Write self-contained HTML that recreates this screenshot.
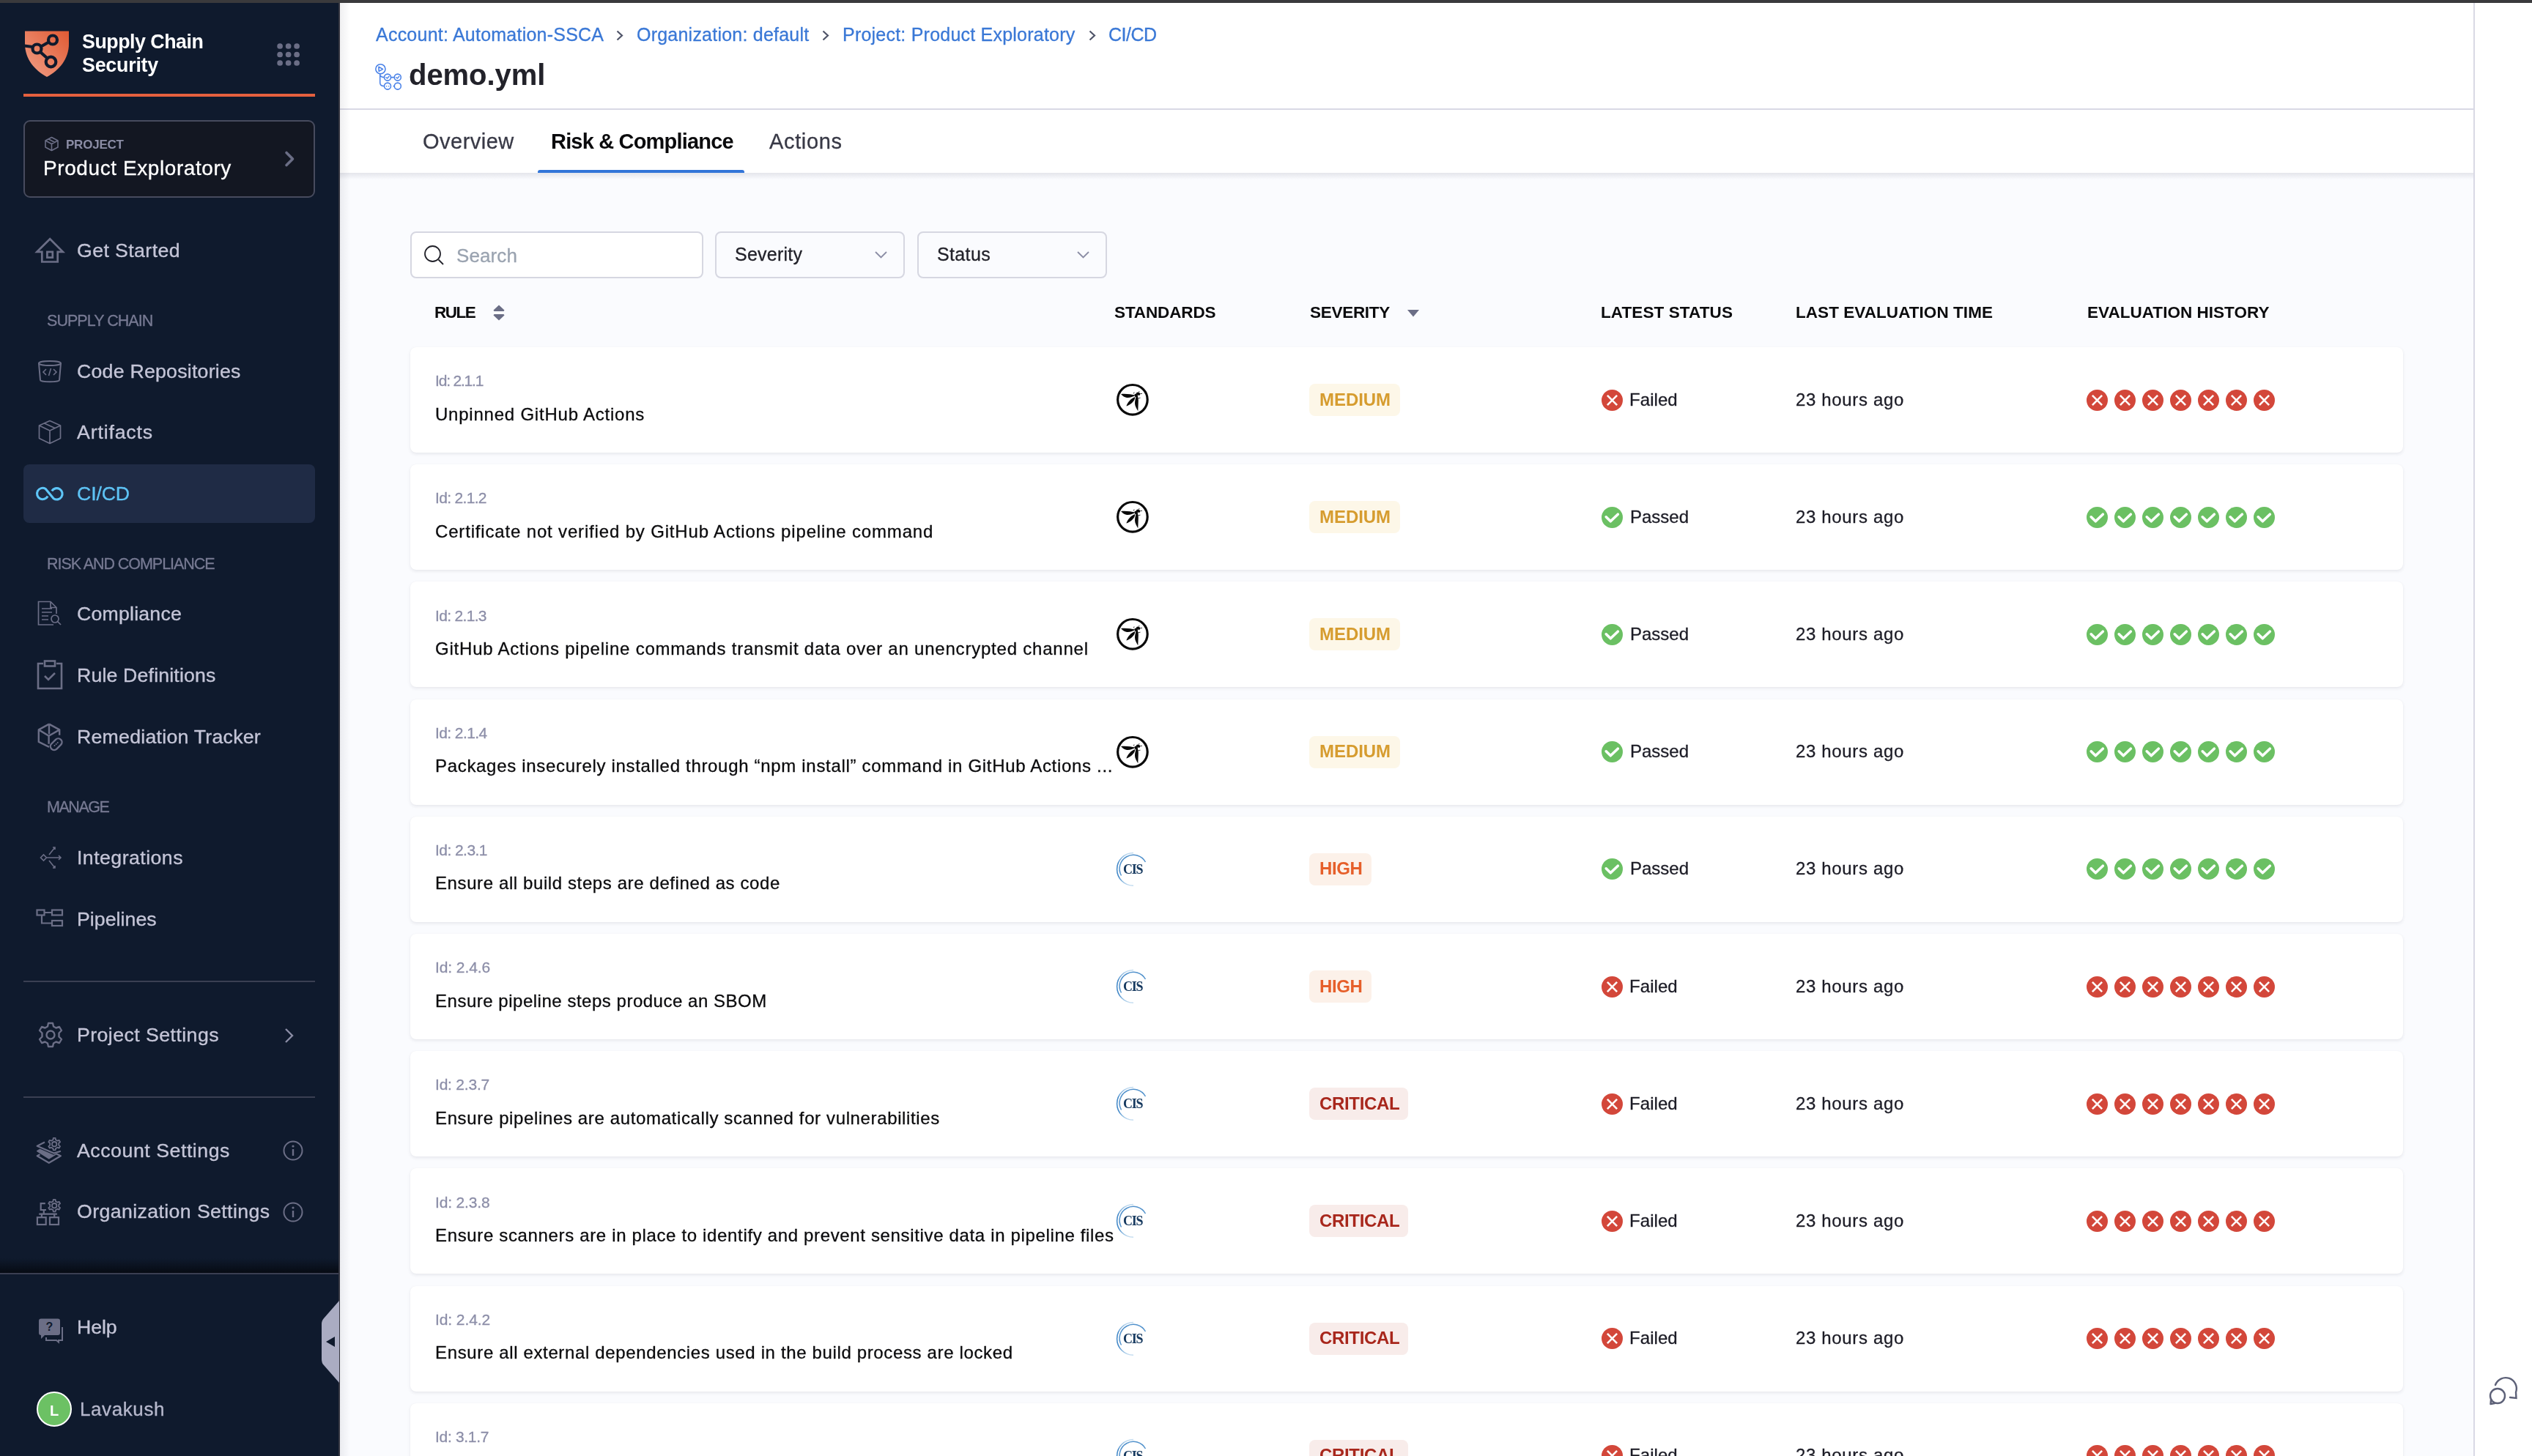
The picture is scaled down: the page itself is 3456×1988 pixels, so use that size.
<!DOCTYPE html><html><head><meta charset="utf-8"><style>
*{box-sizing:border-box;margin:0;padding:0}
html,body{width:3456px;height:1988px;overflow:hidden}
body{position:relative;background:#fafbfe;font-family:"Liberation Sans",sans-serif}
.t{position:absolute;white-space:nowrap;line-height:1;will-change:transform}
.a{position:absolute}
svg{position:absolute;overflow:visible}
</style></head><body>
<div class="a" style="left:464px;top:4px;width:2913px;height:232px;background:#fff"></div>
<div class="a" style="left:464px;top:148px;width:2913px;height:2px;background:#d9d9e5"></div>
<div class="a" style="left:464px;top:236px;width:2913px;height:9px;background:linear-gradient(#e4e5eb,rgba(250,251,254,0))"></div>
<div class="a" style="left:3378px;top:4px;width:78px;height:1984px;background:#fff"></div>
<div class="a" style="left:3376px;top:4px;width:2px;height:1984px;background:#d9d9e5"></div>
<div class="t" style="left:512.60px;top:34.84px;font-size:25px;color:#3a78d6;-webkit-text-stroke-width:0.3px;letter-spacing:0.231px;">Account: Automation-SSCA</div>
<div class="t" style="left:869.00px;top:34.84px;font-size:25px;color:#3a78d6;-webkit-text-stroke-width:0.3px;letter-spacing:0.226px;">Organization: default</div>
<div class="t" style="left:1149.60px;top:34.84px;font-size:25px;color:#3a78d6;-webkit-text-stroke-width:0.3px;letter-spacing:0.222px;">Project: Product Exploratory</div>
<div class="t" style="left:1513.00px;top:34.84px;font-size:25px;color:#3a78d6;-webkit-text-stroke-width:0.3px;letter-spacing:-0.509px;">CI/CD</div>
<svg style="left:841px;top:41px" width="10" height="15" viewBox="0 0 10 15"><path d="M1.5 1.5 L8 7.5 L1.5 13.5" fill="none" stroke="#4f5468" stroke-width="2.2"/></svg>
<svg style="left:1121.5px;top:41px" width="10" height="15" viewBox="0 0 10 15"><path d="M1.5 1.5 L8 7.5 L1.5 13.5" fill="none" stroke="#4f5468" stroke-width="2.2"/></svg>
<svg style="left:1486px;top:41px" width="10" height="15" viewBox="0 0 10 15"><path d="M1.5 1.5 L8 7.5 L1.5 13.5" fill="none" stroke="#4f5468" stroke-width="2.2"/></svg>
<svg style="left:512px;top:87px" width="36" height="36" viewBox="0 0 36 36"><g fill="none" stroke="#4a82e8" stroke-width="1.55" stroke-linejoin="round" stroke-linecap="round">
<circle cx="7.4" cy="7.25" r="6.6"/><path d="M4.9 4.3 L10.6 7.4 L5.2 10.4 Z"/><path d="M6.7 14.3 V26 Q6.7 30.6 12.3 30.6 M6.7 15.8 Q8.5 18.6 12.3 18.6 M21.7 18.6 H26.1 M25.2 30.6 H26.1"/>
<circle cx="17" cy="18.6" r="4.5"/><circle cx="30.8" cy="18.6" r="4.5"/><circle cx="17" cy="30.6" r="4.5"/><circle cx="30.8" cy="30.6" r="4.5"/>
<path d="M15 18.8 L16.5 20 L19 17.3 M28.8 18.8 L30.3 20 L32.8 17.3" stroke-width="1.4"/></g><g fill="#4a82e8"><circle cx="15.6" cy="30.8" r="0.8"/><circle cx="18.6" cy="30.8" r="0.8"/></g></svg>
<div class="t" style="left:557.70px;top:82.14px;font-size:40px;color:#22222a;font-weight:700;letter-spacing:-0.052px;">demo.yml</div>
<div class="t" style="left:577.00px;top:178.85px;font-size:29px;color:#383946;-webkit-text-stroke-width:0.3px;letter-spacing:0.482px;">Overview</div>
<div class="t" style="left:751.50px;top:178.85px;font-size:29px;color:#0b0b0d;font-weight:700;letter-spacing:-0.817px;">Risk &amp; Compliance</div>
<div class="t" style="left:1050.00px;top:178.85px;font-size:29px;color:#383946;-webkit-text-stroke-width:0.3px;letter-spacing:0.644px;">Actions</div>
<div class="a" style="left:734px;top:232px;width:282px;height:4px;background:#3275d8;border-radius:3px 3px 0 0"></div>
<div class="a" style="left:560px;top:316px;width:400px;height:64px;background:#fff;border:2px solid #d6d7e1;border-radius:8px"></div>
<svg style="left:579px;top:335px" width="27" height="27" viewBox="0 0 27 27"><g fill="none" stroke="#22222a" stroke-width="1.8"><circle cx="11.5" cy="11.5" r="10.5"/><path d="M19.5 19.5 L26 26"/></g></svg>
<div class="t" style="left:623.20px;top:335.99px;font-size:26px;color:#9aa3b0;-webkit-text-stroke-width:0.3px;letter-spacing:0.107px;">Search</div>
<div class="a" style="left:976px;top:316px;width:259px;height:64px;border:2px solid #d6d7e1;border-radius:8px"></div>
<div class="t" style="left:1003.00px;top:334.84px;font-size:25px;color:#22222a;-webkit-text-stroke-width:0.3px;letter-spacing:0.236px;">Severity</div>
<svg style="left:1194px;top:343px" width="17" height="10" viewBox="0 0 17 10"><path d="M1 1 L8.5 8.5 L16 1" fill="none" stroke="#8b8da5" stroke-width="1.8"/></svg>
<div class="a" style="left:1252px;top:316px;width:259px;height:64px;border:2px solid #d6d7e1;border-radius:8px"></div>
<div class="t" style="left:1279.00px;top:334.84px;font-size:25px;color:#22222a;-webkit-text-stroke-width:0.3px;letter-spacing:0.352px;">Status</div>
<svg style="left:1470px;top:343px" width="17" height="10" viewBox="0 0 17 10"><path d="M1 1 L8.5 8.5 L16 1" fill="none" stroke="#8b8da5" stroke-width="1.8"/></svg>
<div class="t" style="left:592.90px;top:415.95px;font-size:22.5px;color:#0b0b0d;font-weight:700;letter-spacing:-1.488px;">RULE</div>
<svg style="left:673px;top:416px" width="16" height="22" viewBox="0 0 16 22"><path d="M8 0.5 L15.5 7.5 L14.5 9 H1.5 L0.5 7.5 Z M8 21.5 L15.5 14.5 L14.5 13 H1.5 L0.5 14.5 Z" fill="#6b6e86"/></svg>
<div class="t" style="left:1521.00px;top:415.95px;font-size:22.5px;color:#0b0b0d;font-weight:700;letter-spacing:-0.120px;">STANDARDS</div>
<div class="t" style="left:1787.80px;top:415.95px;font-size:22.5px;color:#0b0b0d;font-weight:700;letter-spacing:-0.281px;">SEVERITY</div>
<svg style="left:1921px;top:423px" width="16" height="10" viewBox="0 0 16 10"><path d="M0 0 H16 L8 9.5 Z" fill="#6b6e86"/></svg>
<div class="t" style="left:2185.00px;top:415.95px;font-size:22.5px;color:#0b0b0d;font-weight:700;letter-spacing:0.097px;">LATEST STATUS</div>
<div class="t" style="left:2451.00px;top:415.95px;font-size:22.5px;color:#0b0b0d;font-weight:700;letter-spacing:0.055px;">LAST EVALUATION TIME</div>
<div class="t" style="left:2849.00px;top:415.95px;font-size:22.5px;color:#0b0b0d;font-weight:700;letter-spacing:0.032px;">EVALUATION HISTORY</div>
<div class="a" style="left:560px;top:474.00px;width:2720px;height:144px;background:#fff;border-radius:8px;box-shadow:0 2px 4px rgba(40,41,61,0.09),0 0 1px rgba(40,41,61,0.05)"></div>
<div class="t" style="left:594.40px;top:509.22px;font-size:21px;color:#8c8ea8;-webkit-text-stroke-width:0.3px;letter-spacing:-1.181px;">Id: 2.1.1</div>
<div class="t" style="left:594.40px;top:553.68px;font-size:24px;color:#0b0b0d;-webkit-text-stroke-width:0.3px;letter-spacing:0.777px;">Unpinned GitHub Actions</div>
<svg style="left:1516px;top:516.0px" width="60" height="60" viewBox="0 0 60 60"><circle cx="29.9" cy="29.8" r="20.3" fill="none" stroke="#0a0a0a" stroke-width="3.2"/><g fill="#0a0a0a">
<path d="M14 22 C20 21.3 28 22.3 34 23.8 C30 26.2 25 27.6 21 26.8 C18 26 15.8 24.2 14 22 Z"/>
<path d="M21.3 38.6 C23.5 33 27 28.5 33.2 26 C33.8 28 31.5 32.2 28.3 34.8 C26.2 36.6 23.6 37.9 21.3 38.6 Z"/>
<path d="M35 24.2 C36.8 24.2 37.8 27 37.8 31 L37.3 45.2 C35 41.5 33 38 33 34.5 C33 31 34.2 27 35 24.2 Z"/>
<path d="M32.5 22.5 L36.5 20.5 L37.2 27.5 L33 25.5 Z"/>
<path d="M35.2 20.2 C36.8 19 38.8 19.4 40.6 21.6 L39.8 23.6 C38.2 24.2 36.4 23.6 35.2 22.4 Z"/>
</g><g stroke="#0a0a0a" stroke-width="0.8" fill="none"><path d="M31.5 21.5 L32 19.5 M38.5 19.5 L39 18 M40.5 21.5 L43 21.5 M37 28 L40.5 27.2"/></g></svg>
<div class="a" style="left:1787px;top:524.00px;width:123.5px;height:44px;background:#fdf7e8;border-radius:8px"></div>
<div class="t" style="left:1800.50px;top:533.68px;font-size:24px;color:#d69c2f;font-weight:700;letter-spacing:-0.057px;">MEDIUM</div>
<svg style="left:2185.5px;top:531.5px" width="29.0" height="29.0" viewBox="0 0 29 29"><circle cx="14.5" cy="14.5" r="14.5" fill="#d3473a"/><path d="M7.9 7.9 L21.1 21.1 M21.1 7.9 L7.9 21.1" stroke="#fff" stroke-width="2.6"/></svg>
<div class="t" style="left:2224.00px;top:533.68px;font-size:24px;color:#1c1c26;-webkit-text-stroke-width:0.3px;letter-spacing:0.059px;">Failed</div>
<div class="t" style="left:2451.30px;top:533.68px;font-size:24px;color:#1c1c26;-webkit-text-stroke-width:0.3px;letter-spacing:0.659px;">23 hours ago</div>
<svg style="left:2848.0px;top:531.5px" width="29.0" height="29.0" viewBox="0 0 29 29"><circle cx="14.5" cy="14.5" r="14.5" fill="#d3473a"/><path d="M7.9 7.9 L21.1 21.1 M21.1 7.9 L7.9 21.1" stroke="#fff" stroke-width="2.6"/></svg><svg style="left:2886.0px;top:531.5px" width="29.0" height="29.0" viewBox="0 0 29 29"><circle cx="14.5" cy="14.5" r="14.5" fill="#d3473a"/><path d="M7.9 7.9 L21.1 21.1 M21.1 7.9 L7.9 21.1" stroke="#fff" stroke-width="2.6"/></svg><svg style="left:2924.0px;top:531.5px" width="29.0" height="29.0" viewBox="0 0 29 29"><circle cx="14.5" cy="14.5" r="14.5" fill="#d3473a"/><path d="M7.9 7.9 L21.1 21.1 M21.1 7.9 L7.9 21.1" stroke="#fff" stroke-width="2.6"/></svg><svg style="left:2962.0px;top:531.5px" width="29.0" height="29.0" viewBox="0 0 29 29"><circle cx="14.5" cy="14.5" r="14.5" fill="#d3473a"/><path d="M7.9 7.9 L21.1 21.1 M21.1 7.9 L7.9 21.1" stroke="#fff" stroke-width="2.6"/></svg><svg style="left:3000.0px;top:531.5px" width="29.0" height="29.0" viewBox="0 0 29 29"><circle cx="14.5" cy="14.5" r="14.5" fill="#d3473a"/><path d="M7.9 7.9 L21.1 21.1 M21.1 7.9 L7.9 21.1" stroke="#fff" stroke-width="2.6"/></svg><svg style="left:3038.0px;top:531.5px" width="29.0" height="29.0" viewBox="0 0 29 29"><circle cx="14.5" cy="14.5" r="14.5" fill="#d3473a"/><path d="M7.9 7.9 L21.1 21.1 M21.1 7.9 L7.9 21.1" stroke="#fff" stroke-width="2.6"/></svg><svg style="left:3076.0px;top:531.5px" width="29.0" height="29.0" viewBox="0 0 29 29"><circle cx="14.5" cy="14.5" r="14.5" fill="#d3473a"/><path d="M7.9 7.9 L21.1 21.1 M21.1 7.9 L7.9 21.1" stroke="#fff" stroke-width="2.6"/></svg>
<div class="a" style="left:560px;top:634.20px;width:2720px;height:144px;background:#fff;border-radius:8px;box-shadow:0 2px 4px rgba(40,41,61,0.09),0 0 1px rgba(40,41,61,0.05)"></div>
<div class="t" style="left:594.40px;top:669.42px;font-size:21px;color:#8c8ea8;-webkit-text-stroke-width:0.3px;letter-spacing:-0.670px;">Id: 2.1.2</div>
<div class="t" style="left:594.40px;top:713.88px;font-size:24px;color:#0b0b0d;-webkit-text-stroke-width:0.3px;letter-spacing:0.835px;">Certificate not verified by GitHub Actions pipeline command</div>
<svg style="left:1516px;top:676.2px" width="60" height="60" viewBox="0 0 60 60"><circle cx="29.9" cy="29.8" r="20.3" fill="none" stroke="#0a0a0a" stroke-width="3.2"/><g fill="#0a0a0a">
<path d="M14 22 C20 21.3 28 22.3 34 23.8 C30 26.2 25 27.6 21 26.8 C18 26 15.8 24.2 14 22 Z"/>
<path d="M21.3 38.6 C23.5 33 27 28.5 33.2 26 C33.8 28 31.5 32.2 28.3 34.8 C26.2 36.6 23.6 37.9 21.3 38.6 Z"/>
<path d="M35 24.2 C36.8 24.2 37.8 27 37.8 31 L37.3 45.2 C35 41.5 33 38 33 34.5 C33 31 34.2 27 35 24.2 Z"/>
<path d="M32.5 22.5 L36.5 20.5 L37.2 27.5 L33 25.5 Z"/>
<path d="M35.2 20.2 C36.8 19 38.8 19.4 40.6 21.6 L39.8 23.6 C38.2 24.2 36.4 23.6 35.2 22.4 Z"/>
</g><g stroke="#0a0a0a" stroke-width="0.8" fill="none"><path d="M31.5 21.5 L32 19.5 M38.5 19.5 L39 18 M40.5 21.5 L43 21.5 M37 28 L40.5 27.2"/></g></svg>
<div class="a" style="left:1787px;top:684.20px;width:123.5px;height:44px;background:#fdf7e8;border-radius:8px"></div>
<div class="t" style="left:1800.50px;top:693.88px;font-size:24px;color:#d69c2f;font-weight:700;letter-spacing:-0.057px;">MEDIUM</div>
<svg style="left:2185.5px;top:691.7px" width="29.0" height="29.0" viewBox="0 0 29 29"><circle cx="14.5" cy="14.5" r="14.5" fill="#6bc063"/><path d="M6.2 13.8 L12.3 19.8 L22.3 10.2" fill="none" stroke="#fff" stroke-width="3.6" stroke-linecap="round" stroke-linejoin="round"/></svg>
<div class="t" style="left:2224.60px;top:693.88px;font-size:24px;color:#1c1c26;-webkit-text-stroke-width:0.3px;letter-spacing:-0.008px;">Passed</div>
<div class="t" style="left:2451.30px;top:693.88px;font-size:24px;color:#1c1c26;-webkit-text-stroke-width:0.3px;letter-spacing:0.659px;">23 hours ago</div>
<svg style="left:2848.0px;top:691.7px" width="29.0" height="29.0" viewBox="0 0 29 29"><circle cx="14.5" cy="14.5" r="14.5" fill="#6bc063"/><path d="M6.2 13.8 L12.3 19.8 L22.3 10.2" fill="none" stroke="#fff" stroke-width="3.6" stroke-linecap="round" stroke-linejoin="round"/></svg><svg style="left:2886.0px;top:691.7px" width="29.0" height="29.0" viewBox="0 0 29 29"><circle cx="14.5" cy="14.5" r="14.5" fill="#6bc063"/><path d="M6.2 13.8 L12.3 19.8 L22.3 10.2" fill="none" stroke="#fff" stroke-width="3.6" stroke-linecap="round" stroke-linejoin="round"/></svg><svg style="left:2924.0px;top:691.7px" width="29.0" height="29.0" viewBox="0 0 29 29"><circle cx="14.5" cy="14.5" r="14.5" fill="#6bc063"/><path d="M6.2 13.8 L12.3 19.8 L22.3 10.2" fill="none" stroke="#fff" stroke-width="3.6" stroke-linecap="round" stroke-linejoin="round"/></svg><svg style="left:2962.0px;top:691.7px" width="29.0" height="29.0" viewBox="0 0 29 29"><circle cx="14.5" cy="14.5" r="14.5" fill="#6bc063"/><path d="M6.2 13.8 L12.3 19.8 L22.3 10.2" fill="none" stroke="#fff" stroke-width="3.6" stroke-linecap="round" stroke-linejoin="round"/></svg><svg style="left:3000.0px;top:691.7px" width="29.0" height="29.0" viewBox="0 0 29 29"><circle cx="14.5" cy="14.5" r="14.5" fill="#6bc063"/><path d="M6.2 13.8 L12.3 19.8 L22.3 10.2" fill="none" stroke="#fff" stroke-width="3.6" stroke-linecap="round" stroke-linejoin="round"/></svg><svg style="left:3038.0px;top:691.7px" width="29.0" height="29.0" viewBox="0 0 29 29"><circle cx="14.5" cy="14.5" r="14.5" fill="#6bc063"/><path d="M6.2 13.8 L12.3 19.8 L22.3 10.2" fill="none" stroke="#fff" stroke-width="3.6" stroke-linecap="round" stroke-linejoin="round"/></svg><svg style="left:3076.0px;top:691.7px" width="29.0" height="29.0" viewBox="0 0 29 29"><circle cx="14.5" cy="14.5" r="14.5" fill="#6bc063"/><path d="M6.2 13.8 L12.3 19.8 L22.3 10.2" fill="none" stroke="#fff" stroke-width="3.6" stroke-linecap="round" stroke-linejoin="round"/></svg>
<div class="a" style="left:560px;top:794.40px;width:2720px;height:144px;background:#fff;border-radius:8px;box-shadow:0 2px 4px rgba(40,41,61,0.09),0 0 1px rgba(40,41,61,0.05)"></div>
<div class="t" style="left:594.40px;top:829.62px;font-size:21px;color:#8c8ea8;-webkit-text-stroke-width:0.3px;letter-spacing:-0.670px;">Id: 2.1.3</div>
<div class="t" style="left:594.40px;top:874.08px;font-size:24px;color:#0b0b0d;-webkit-text-stroke-width:0.3px;letter-spacing:0.784px;">GitHub Actions pipeline commands transmit data over an unencrypted channel</div>
<svg style="left:1516px;top:836.4px" width="60" height="60" viewBox="0 0 60 60"><circle cx="29.9" cy="29.8" r="20.3" fill="none" stroke="#0a0a0a" stroke-width="3.2"/><g fill="#0a0a0a">
<path d="M14 22 C20 21.3 28 22.3 34 23.8 C30 26.2 25 27.6 21 26.8 C18 26 15.8 24.2 14 22 Z"/>
<path d="M21.3 38.6 C23.5 33 27 28.5 33.2 26 C33.8 28 31.5 32.2 28.3 34.8 C26.2 36.6 23.6 37.9 21.3 38.6 Z"/>
<path d="M35 24.2 C36.8 24.2 37.8 27 37.8 31 L37.3 45.2 C35 41.5 33 38 33 34.5 C33 31 34.2 27 35 24.2 Z"/>
<path d="M32.5 22.5 L36.5 20.5 L37.2 27.5 L33 25.5 Z"/>
<path d="M35.2 20.2 C36.8 19 38.8 19.4 40.6 21.6 L39.8 23.6 C38.2 24.2 36.4 23.6 35.2 22.4 Z"/>
</g><g stroke="#0a0a0a" stroke-width="0.8" fill="none"><path d="M31.5 21.5 L32 19.5 M38.5 19.5 L39 18 M40.5 21.5 L43 21.5 M37 28 L40.5 27.2"/></g></svg>
<div class="a" style="left:1787px;top:844.40px;width:123.5px;height:44px;background:#fdf7e8;border-radius:8px"></div>
<div class="t" style="left:1800.50px;top:854.08px;font-size:24px;color:#d69c2f;font-weight:700;letter-spacing:-0.057px;">MEDIUM</div>
<svg style="left:2185.5px;top:851.9px" width="29.0" height="29.0" viewBox="0 0 29 29"><circle cx="14.5" cy="14.5" r="14.5" fill="#6bc063"/><path d="M6.2 13.8 L12.3 19.8 L22.3 10.2" fill="none" stroke="#fff" stroke-width="3.6" stroke-linecap="round" stroke-linejoin="round"/></svg>
<div class="t" style="left:2224.60px;top:854.08px;font-size:24px;color:#1c1c26;-webkit-text-stroke-width:0.3px;letter-spacing:-0.008px;">Passed</div>
<div class="t" style="left:2451.30px;top:854.08px;font-size:24px;color:#1c1c26;-webkit-text-stroke-width:0.3px;letter-spacing:0.659px;">23 hours ago</div>
<svg style="left:2848.0px;top:851.9px" width="29.0" height="29.0" viewBox="0 0 29 29"><circle cx="14.5" cy="14.5" r="14.5" fill="#6bc063"/><path d="M6.2 13.8 L12.3 19.8 L22.3 10.2" fill="none" stroke="#fff" stroke-width="3.6" stroke-linecap="round" stroke-linejoin="round"/></svg><svg style="left:2886.0px;top:851.9px" width="29.0" height="29.0" viewBox="0 0 29 29"><circle cx="14.5" cy="14.5" r="14.5" fill="#6bc063"/><path d="M6.2 13.8 L12.3 19.8 L22.3 10.2" fill="none" stroke="#fff" stroke-width="3.6" stroke-linecap="round" stroke-linejoin="round"/></svg><svg style="left:2924.0px;top:851.9px" width="29.0" height="29.0" viewBox="0 0 29 29"><circle cx="14.5" cy="14.5" r="14.5" fill="#6bc063"/><path d="M6.2 13.8 L12.3 19.8 L22.3 10.2" fill="none" stroke="#fff" stroke-width="3.6" stroke-linecap="round" stroke-linejoin="round"/></svg><svg style="left:2962.0px;top:851.9px" width="29.0" height="29.0" viewBox="0 0 29 29"><circle cx="14.5" cy="14.5" r="14.5" fill="#6bc063"/><path d="M6.2 13.8 L12.3 19.8 L22.3 10.2" fill="none" stroke="#fff" stroke-width="3.6" stroke-linecap="round" stroke-linejoin="round"/></svg><svg style="left:3000.0px;top:851.9px" width="29.0" height="29.0" viewBox="0 0 29 29"><circle cx="14.5" cy="14.5" r="14.5" fill="#6bc063"/><path d="M6.2 13.8 L12.3 19.8 L22.3 10.2" fill="none" stroke="#fff" stroke-width="3.6" stroke-linecap="round" stroke-linejoin="round"/></svg><svg style="left:3038.0px;top:851.9px" width="29.0" height="29.0" viewBox="0 0 29 29"><circle cx="14.5" cy="14.5" r="14.5" fill="#6bc063"/><path d="M6.2 13.8 L12.3 19.8 L22.3 10.2" fill="none" stroke="#fff" stroke-width="3.6" stroke-linecap="round" stroke-linejoin="round"/></svg><svg style="left:3076.0px;top:851.9px" width="29.0" height="29.0" viewBox="0 0 29 29"><circle cx="14.5" cy="14.5" r="14.5" fill="#6bc063"/><path d="M6.2 13.8 L12.3 19.8 L22.3 10.2" fill="none" stroke="#fff" stroke-width="3.6" stroke-linecap="round" stroke-linejoin="round"/></svg>
<div class="a" style="left:560px;top:954.60px;width:2720px;height:144px;background:#fff;border-radius:8px;box-shadow:0 2px 4px rgba(40,41,61,0.09),0 0 1px rgba(40,41,61,0.05)"></div>
<div class="t" style="left:594.40px;top:989.82px;font-size:21px;color:#8c8ea8;-webkit-text-stroke-width:0.3px;letter-spacing:-0.592px;">Id: 2.1.4</div>
<div class="t" style="left:594.40px;top:1034.28px;font-size:24px;color:#0b0b0d;-webkit-text-stroke-width:0.3px;letter-spacing:0.684px;">Packages insecurely installed through &#8220;npm install&#8221; command in GitHub Actions ...</div>
<svg style="left:1516px;top:996.5999999999999px" width="60" height="60" viewBox="0 0 60 60"><circle cx="29.9" cy="29.8" r="20.3" fill="none" stroke="#0a0a0a" stroke-width="3.2"/><g fill="#0a0a0a">
<path d="M14 22 C20 21.3 28 22.3 34 23.8 C30 26.2 25 27.6 21 26.8 C18 26 15.8 24.2 14 22 Z"/>
<path d="M21.3 38.6 C23.5 33 27 28.5 33.2 26 C33.8 28 31.5 32.2 28.3 34.8 C26.2 36.6 23.6 37.9 21.3 38.6 Z"/>
<path d="M35 24.2 C36.8 24.2 37.8 27 37.8 31 L37.3 45.2 C35 41.5 33 38 33 34.5 C33 31 34.2 27 35 24.2 Z"/>
<path d="M32.5 22.5 L36.5 20.5 L37.2 27.5 L33 25.5 Z"/>
<path d="M35.2 20.2 C36.8 19 38.8 19.4 40.6 21.6 L39.8 23.6 C38.2 24.2 36.4 23.6 35.2 22.4 Z"/>
</g><g stroke="#0a0a0a" stroke-width="0.8" fill="none"><path d="M31.5 21.5 L32 19.5 M38.5 19.5 L39 18 M40.5 21.5 L43 21.5 M37 28 L40.5 27.2"/></g></svg>
<div class="a" style="left:1787px;top:1004.60px;width:123.5px;height:44px;background:#fdf7e8;border-radius:8px"></div>
<div class="t" style="left:1800.50px;top:1014.28px;font-size:24px;color:#d69c2f;font-weight:700;letter-spacing:-0.057px;">MEDIUM</div>
<svg style="left:2185.5px;top:1012.0999999999999px" width="29.0" height="29.0" viewBox="0 0 29 29"><circle cx="14.5" cy="14.5" r="14.5" fill="#6bc063"/><path d="M6.2 13.8 L12.3 19.8 L22.3 10.2" fill="none" stroke="#fff" stroke-width="3.6" stroke-linecap="round" stroke-linejoin="round"/></svg>
<div class="t" style="left:2224.60px;top:1014.28px;font-size:24px;color:#1c1c26;-webkit-text-stroke-width:0.3px;letter-spacing:-0.008px;">Passed</div>
<div class="t" style="left:2451.30px;top:1014.28px;font-size:24px;color:#1c1c26;-webkit-text-stroke-width:0.3px;letter-spacing:0.659px;">23 hours ago</div>
<svg style="left:2848.0px;top:1012.0999999999999px" width="29.0" height="29.0" viewBox="0 0 29 29"><circle cx="14.5" cy="14.5" r="14.5" fill="#6bc063"/><path d="M6.2 13.8 L12.3 19.8 L22.3 10.2" fill="none" stroke="#fff" stroke-width="3.6" stroke-linecap="round" stroke-linejoin="round"/></svg><svg style="left:2886.0px;top:1012.0999999999999px" width="29.0" height="29.0" viewBox="0 0 29 29"><circle cx="14.5" cy="14.5" r="14.5" fill="#6bc063"/><path d="M6.2 13.8 L12.3 19.8 L22.3 10.2" fill="none" stroke="#fff" stroke-width="3.6" stroke-linecap="round" stroke-linejoin="round"/></svg><svg style="left:2924.0px;top:1012.0999999999999px" width="29.0" height="29.0" viewBox="0 0 29 29"><circle cx="14.5" cy="14.5" r="14.5" fill="#6bc063"/><path d="M6.2 13.8 L12.3 19.8 L22.3 10.2" fill="none" stroke="#fff" stroke-width="3.6" stroke-linecap="round" stroke-linejoin="round"/></svg><svg style="left:2962.0px;top:1012.0999999999999px" width="29.0" height="29.0" viewBox="0 0 29 29"><circle cx="14.5" cy="14.5" r="14.5" fill="#6bc063"/><path d="M6.2 13.8 L12.3 19.8 L22.3 10.2" fill="none" stroke="#fff" stroke-width="3.6" stroke-linecap="round" stroke-linejoin="round"/></svg><svg style="left:3000.0px;top:1012.0999999999999px" width="29.0" height="29.0" viewBox="0 0 29 29"><circle cx="14.5" cy="14.5" r="14.5" fill="#6bc063"/><path d="M6.2 13.8 L12.3 19.8 L22.3 10.2" fill="none" stroke="#fff" stroke-width="3.6" stroke-linecap="round" stroke-linejoin="round"/></svg><svg style="left:3038.0px;top:1012.0999999999999px" width="29.0" height="29.0" viewBox="0 0 29 29"><circle cx="14.5" cy="14.5" r="14.5" fill="#6bc063"/><path d="M6.2 13.8 L12.3 19.8 L22.3 10.2" fill="none" stroke="#fff" stroke-width="3.6" stroke-linecap="round" stroke-linejoin="round"/></svg><svg style="left:3076.0px;top:1012.0999999999999px" width="29.0" height="29.0" viewBox="0 0 29 29"><circle cx="14.5" cy="14.5" r="14.5" fill="#6bc063"/><path d="M6.2 13.8 L12.3 19.8 L22.3 10.2" fill="none" stroke="#fff" stroke-width="3.6" stroke-linecap="round" stroke-linejoin="round"/></svg>
<div class="a" style="left:560px;top:1114.80px;width:2720px;height:144px;background:#fff;border-radius:8px;box-shadow:0 2px 4px rgba(40,41,61,0.09),0 0 1px rgba(40,41,61,0.05)"></div>
<div class="t" style="left:594.40px;top:1150.02px;font-size:21px;color:#8c8ea8;-webkit-text-stroke-width:0.3px;letter-spacing:-0.548px;">Id: 2.3.1</div>
<div class="t" style="left:594.40px;top:1194.48px;font-size:24px;color:#0b0b0d;-webkit-text-stroke-width:0.3px;letter-spacing:0.603px;">Ensure all build steps are defined as code</div>
<svg style="left:1516px;top:1156.8px" width="60" height="60" viewBox="0 0 60 60">
<defs><linearGradient id="cg" x1="0" y1="0" x2="0" y2="1"><stop offset="0" stop-color="#8dbde3" stop-opacity="0.5"/><stop offset="0.3" stop-color="#3f86c7"/><stop offset="0.75" stop-color="#3f86c7"/><stop offset="1" stop-color="#8dbde3" stop-opacity="0.5"/></linearGradient></defs>
<path d="M31 7.5 A22.4 22.4 0 0 0 31 52.3" fill="none" stroke="url(#cg)" stroke-width="1.5"/>
<path d="M47.5 20 A18.6 18.6 0 1 0 14.5 38.5" fill="none" stroke="#3f86c7" stroke-width="1.5" stroke-opacity="0.9"/>
<text x="17.0" y="35.8" font-family="Liberation Serif" font-weight="700" font-size="18" fill="#173a60" letter-spacing="-1.25">CIS</text></svg>
<div class="a" style="left:1787px;top:1164.80px;width:85px;height:44px;background:#fcf1e9;border-radius:8px"></div>
<div class="t" style="left:1800.50px;top:1174.48px;font-size:24px;color:#e65f2a;font-weight:700;letter-spacing:-0.425px;">HIGH</div>
<svg style="left:2185.5px;top:1172.3px" width="29.0" height="29.0" viewBox="0 0 29 29"><circle cx="14.5" cy="14.5" r="14.5" fill="#6bc063"/><path d="M6.2 13.8 L12.3 19.8 L22.3 10.2" fill="none" stroke="#fff" stroke-width="3.6" stroke-linecap="round" stroke-linejoin="round"/></svg>
<div class="t" style="left:2224.60px;top:1174.48px;font-size:24px;color:#1c1c26;-webkit-text-stroke-width:0.3px;letter-spacing:-0.008px;">Passed</div>
<div class="t" style="left:2451.30px;top:1174.48px;font-size:24px;color:#1c1c26;-webkit-text-stroke-width:0.3px;letter-spacing:0.659px;">23 hours ago</div>
<svg style="left:2848.0px;top:1172.3px" width="29.0" height="29.0" viewBox="0 0 29 29"><circle cx="14.5" cy="14.5" r="14.5" fill="#6bc063"/><path d="M6.2 13.8 L12.3 19.8 L22.3 10.2" fill="none" stroke="#fff" stroke-width="3.6" stroke-linecap="round" stroke-linejoin="round"/></svg><svg style="left:2886.0px;top:1172.3px" width="29.0" height="29.0" viewBox="0 0 29 29"><circle cx="14.5" cy="14.5" r="14.5" fill="#6bc063"/><path d="M6.2 13.8 L12.3 19.8 L22.3 10.2" fill="none" stroke="#fff" stroke-width="3.6" stroke-linecap="round" stroke-linejoin="round"/></svg><svg style="left:2924.0px;top:1172.3px" width="29.0" height="29.0" viewBox="0 0 29 29"><circle cx="14.5" cy="14.5" r="14.5" fill="#6bc063"/><path d="M6.2 13.8 L12.3 19.8 L22.3 10.2" fill="none" stroke="#fff" stroke-width="3.6" stroke-linecap="round" stroke-linejoin="round"/></svg><svg style="left:2962.0px;top:1172.3px" width="29.0" height="29.0" viewBox="0 0 29 29"><circle cx="14.5" cy="14.5" r="14.5" fill="#6bc063"/><path d="M6.2 13.8 L12.3 19.8 L22.3 10.2" fill="none" stroke="#fff" stroke-width="3.6" stroke-linecap="round" stroke-linejoin="round"/></svg><svg style="left:3000.0px;top:1172.3px" width="29.0" height="29.0" viewBox="0 0 29 29"><circle cx="14.5" cy="14.5" r="14.5" fill="#6bc063"/><path d="M6.2 13.8 L12.3 19.8 L22.3 10.2" fill="none" stroke="#fff" stroke-width="3.6" stroke-linecap="round" stroke-linejoin="round"/></svg><svg style="left:3038.0px;top:1172.3px" width="29.0" height="29.0" viewBox="0 0 29 29"><circle cx="14.5" cy="14.5" r="14.5" fill="#6bc063"/><path d="M6.2 13.8 L12.3 19.8 L22.3 10.2" fill="none" stroke="#fff" stroke-width="3.6" stroke-linecap="round" stroke-linejoin="round"/></svg><svg style="left:3076.0px;top:1172.3px" width="29.0" height="29.0" viewBox="0 0 29 29"><circle cx="14.5" cy="14.5" r="14.5" fill="#6bc063"/><path d="M6.2 13.8 L12.3 19.8 L22.3 10.2" fill="none" stroke="#fff" stroke-width="3.6" stroke-linecap="round" stroke-linejoin="round"/></svg>
<div class="a" style="left:560px;top:1275.00px;width:2720px;height:144px;background:#fff;border-radius:8px;box-shadow:0 2px 4px rgba(40,41,61,0.09),0 0 1px rgba(40,41,61,0.05)"></div>
<div class="t" style="left:594.40px;top:1310.22px;font-size:21px;color:#8c8ea8;-webkit-text-stroke-width:0.3px;letter-spacing:-0.092px;">Id: 2.4.6</div>
<div class="t" style="left:594.40px;top:1354.68px;font-size:24px;color:#0b0b0d;-webkit-text-stroke-width:0.3px;letter-spacing:0.517px;">Ensure pipeline steps produce an SBOM</div>
<svg style="left:1516px;top:1317.0px" width="60" height="60" viewBox="0 0 60 60">
<defs><linearGradient id="cg" x1="0" y1="0" x2="0" y2="1"><stop offset="0" stop-color="#8dbde3" stop-opacity="0.5"/><stop offset="0.3" stop-color="#3f86c7"/><stop offset="0.75" stop-color="#3f86c7"/><stop offset="1" stop-color="#8dbde3" stop-opacity="0.5"/></linearGradient></defs>
<path d="M31 7.5 A22.4 22.4 0 0 0 31 52.3" fill="none" stroke="url(#cg)" stroke-width="1.5"/>
<path d="M47.5 20 A18.6 18.6 0 1 0 14.5 38.5" fill="none" stroke="#3f86c7" stroke-width="1.5" stroke-opacity="0.9"/>
<text x="17.0" y="35.8" font-family="Liberation Serif" font-weight="700" font-size="18" fill="#173a60" letter-spacing="-1.25">CIS</text></svg>
<div class="a" style="left:1787px;top:1325.00px;width:85px;height:44px;background:#fcf1e9;border-radius:8px"></div>
<div class="t" style="left:1800.50px;top:1334.68px;font-size:24px;color:#e65f2a;font-weight:700;letter-spacing:-0.425px;">HIGH</div>
<svg style="left:2185.5px;top:1332.5px" width="29.0" height="29.0" viewBox="0 0 29 29"><circle cx="14.5" cy="14.5" r="14.5" fill="#d3473a"/><path d="M7.9 7.9 L21.1 21.1 M21.1 7.9 L7.9 21.1" stroke="#fff" stroke-width="2.6"/></svg>
<div class="t" style="left:2224.00px;top:1334.68px;font-size:24px;color:#1c1c26;-webkit-text-stroke-width:0.3px;letter-spacing:0.059px;">Failed</div>
<div class="t" style="left:2451.30px;top:1334.68px;font-size:24px;color:#1c1c26;-webkit-text-stroke-width:0.3px;letter-spacing:0.659px;">23 hours ago</div>
<svg style="left:2848.0px;top:1332.5px" width="29.0" height="29.0" viewBox="0 0 29 29"><circle cx="14.5" cy="14.5" r="14.5" fill="#d3473a"/><path d="M7.9 7.9 L21.1 21.1 M21.1 7.9 L7.9 21.1" stroke="#fff" stroke-width="2.6"/></svg><svg style="left:2886.0px;top:1332.5px" width="29.0" height="29.0" viewBox="0 0 29 29"><circle cx="14.5" cy="14.5" r="14.5" fill="#d3473a"/><path d="M7.9 7.9 L21.1 21.1 M21.1 7.9 L7.9 21.1" stroke="#fff" stroke-width="2.6"/></svg><svg style="left:2924.0px;top:1332.5px" width="29.0" height="29.0" viewBox="0 0 29 29"><circle cx="14.5" cy="14.5" r="14.5" fill="#d3473a"/><path d="M7.9 7.9 L21.1 21.1 M21.1 7.9 L7.9 21.1" stroke="#fff" stroke-width="2.6"/></svg><svg style="left:2962.0px;top:1332.5px" width="29.0" height="29.0" viewBox="0 0 29 29"><circle cx="14.5" cy="14.5" r="14.5" fill="#d3473a"/><path d="M7.9 7.9 L21.1 21.1 M21.1 7.9 L7.9 21.1" stroke="#fff" stroke-width="2.6"/></svg><svg style="left:3000.0px;top:1332.5px" width="29.0" height="29.0" viewBox="0 0 29 29"><circle cx="14.5" cy="14.5" r="14.5" fill="#d3473a"/><path d="M7.9 7.9 L21.1 21.1 M21.1 7.9 L7.9 21.1" stroke="#fff" stroke-width="2.6"/></svg><svg style="left:3038.0px;top:1332.5px" width="29.0" height="29.0" viewBox="0 0 29 29"><circle cx="14.5" cy="14.5" r="14.5" fill="#d3473a"/><path d="M7.9 7.9 L21.1 21.1 M21.1 7.9 L7.9 21.1" stroke="#fff" stroke-width="2.6"/></svg><svg style="left:3076.0px;top:1332.5px" width="29.0" height="29.0" viewBox="0 0 29 29"><circle cx="14.5" cy="14.5" r="14.5" fill="#d3473a"/><path d="M7.9 7.9 L21.1 21.1 M21.1 7.9 L7.9 21.1" stroke="#fff" stroke-width="2.6"/></svg>
<div class="a" style="left:560px;top:1435.20px;width:2720px;height:144px;background:#fff;border-radius:8px;box-shadow:0 2px 4px rgba(40,41,61,0.09),0 0 1px rgba(40,41,61,0.05)"></div>
<div class="t" style="left:594.40px;top:1470.42px;font-size:21px;color:#8c8ea8;-webkit-text-stroke-width:0.3px;letter-spacing:-0.203px;">Id: 2.3.7</div>
<div class="t" style="left:594.40px;top:1514.88px;font-size:24px;color:#0b0b0d;-webkit-text-stroke-width:0.3px;letter-spacing:0.633px;">Ensure pipelines are automatically scanned for vulnerabilities</div>
<svg style="left:1516px;top:1477.1999999999998px" width="60" height="60" viewBox="0 0 60 60">
<defs><linearGradient id="cg" x1="0" y1="0" x2="0" y2="1"><stop offset="0" stop-color="#8dbde3" stop-opacity="0.5"/><stop offset="0.3" stop-color="#3f86c7"/><stop offset="0.75" stop-color="#3f86c7"/><stop offset="1" stop-color="#8dbde3" stop-opacity="0.5"/></linearGradient></defs>
<path d="M31 7.5 A22.4 22.4 0 0 0 31 52.3" fill="none" stroke="url(#cg)" stroke-width="1.5"/>
<path d="M47.5 20 A18.6 18.6 0 1 0 14.5 38.5" fill="none" stroke="#3f86c7" stroke-width="1.5" stroke-opacity="0.9"/>
<text x="17.0" y="35.8" font-family="Liberation Serif" font-weight="700" font-size="18" fill="#173a60" letter-spacing="-1.25">CIS</text></svg>
<div class="a" style="left:1787px;top:1485.20px;width:135px;height:44px;background:#f8ecea;border-radius:8px"></div>
<div class="t" style="left:1800.50px;top:1494.88px;font-size:24px;color:#a8271c;font-weight:700;letter-spacing:-0.334px;">CRITICAL</div>
<svg style="left:2185.5px;top:1492.6999999999998px" width="29.0" height="29.0" viewBox="0 0 29 29"><circle cx="14.5" cy="14.5" r="14.5" fill="#d3473a"/><path d="M7.9 7.9 L21.1 21.1 M21.1 7.9 L7.9 21.1" stroke="#fff" stroke-width="2.6"/></svg>
<div class="t" style="left:2224.00px;top:1494.88px;font-size:24px;color:#1c1c26;-webkit-text-stroke-width:0.3px;letter-spacing:0.059px;">Failed</div>
<div class="t" style="left:2451.30px;top:1494.88px;font-size:24px;color:#1c1c26;-webkit-text-stroke-width:0.3px;letter-spacing:0.659px;">23 hours ago</div>
<svg style="left:2848.0px;top:1492.6999999999998px" width="29.0" height="29.0" viewBox="0 0 29 29"><circle cx="14.5" cy="14.5" r="14.5" fill="#d3473a"/><path d="M7.9 7.9 L21.1 21.1 M21.1 7.9 L7.9 21.1" stroke="#fff" stroke-width="2.6"/></svg><svg style="left:2886.0px;top:1492.6999999999998px" width="29.0" height="29.0" viewBox="0 0 29 29"><circle cx="14.5" cy="14.5" r="14.5" fill="#d3473a"/><path d="M7.9 7.9 L21.1 21.1 M21.1 7.9 L7.9 21.1" stroke="#fff" stroke-width="2.6"/></svg><svg style="left:2924.0px;top:1492.6999999999998px" width="29.0" height="29.0" viewBox="0 0 29 29"><circle cx="14.5" cy="14.5" r="14.5" fill="#d3473a"/><path d="M7.9 7.9 L21.1 21.1 M21.1 7.9 L7.9 21.1" stroke="#fff" stroke-width="2.6"/></svg><svg style="left:2962.0px;top:1492.6999999999998px" width="29.0" height="29.0" viewBox="0 0 29 29"><circle cx="14.5" cy="14.5" r="14.5" fill="#d3473a"/><path d="M7.9 7.9 L21.1 21.1 M21.1 7.9 L7.9 21.1" stroke="#fff" stroke-width="2.6"/></svg><svg style="left:3000.0px;top:1492.6999999999998px" width="29.0" height="29.0" viewBox="0 0 29 29"><circle cx="14.5" cy="14.5" r="14.5" fill="#d3473a"/><path d="M7.9 7.9 L21.1 21.1 M21.1 7.9 L7.9 21.1" stroke="#fff" stroke-width="2.6"/></svg><svg style="left:3038.0px;top:1492.6999999999998px" width="29.0" height="29.0" viewBox="0 0 29 29"><circle cx="14.5" cy="14.5" r="14.5" fill="#d3473a"/><path d="M7.9 7.9 L21.1 21.1 M21.1 7.9 L7.9 21.1" stroke="#fff" stroke-width="2.6"/></svg><svg style="left:3076.0px;top:1492.6999999999998px" width="29.0" height="29.0" viewBox="0 0 29 29"><circle cx="14.5" cy="14.5" r="14.5" fill="#d3473a"/><path d="M7.9 7.9 L21.1 21.1 M21.1 7.9 L7.9 21.1" stroke="#fff" stroke-width="2.6"/></svg>
<div class="a" style="left:560px;top:1595.40px;width:2720px;height:144px;background:#fff;border-radius:8px;box-shadow:0 2px 4px rgba(40,41,61,0.09),0 0 1px rgba(40,41,61,0.05)"></div>
<div class="t" style="left:594.40px;top:1630.62px;font-size:21px;color:#8c8ea8;-webkit-text-stroke-width:0.3px;letter-spacing:-0.148px;">Id: 2.3.8</div>
<div class="t" style="left:594.40px;top:1675.08px;font-size:24px;color:#0b0b0d;-webkit-text-stroke-width:0.3px;letter-spacing:0.653px;">Ensure scanners are in place to identify and prevent sensitive data in pipeline files</div>
<svg style="left:1516px;top:1637.3999999999999px" width="60" height="60" viewBox="0 0 60 60">
<defs><linearGradient id="cg" x1="0" y1="0" x2="0" y2="1"><stop offset="0" stop-color="#8dbde3" stop-opacity="0.5"/><stop offset="0.3" stop-color="#3f86c7"/><stop offset="0.75" stop-color="#3f86c7"/><stop offset="1" stop-color="#8dbde3" stop-opacity="0.5"/></linearGradient></defs>
<path d="M31 7.5 A22.4 22.4 0 0 0 31 52.3" fill="none" stroke="url(#cg)" stroke-width="1.5"/>
<path d="M47.5 20 A18.6 18.6 0 1 0 14.5 38.5" fill="none" stroke="#3f86c7" stroke-width="1.5" stroke-opacity="0.9"/>
<text x="17.0" y="35.8" font-family="Liberation Serif" font-weight="700" font-size="18" fill="#173a60" letter-spacing="-1.25">CIS</text></svg>
<div class="a" style="left:1787px;top:1645.40px;width:135px;height:44px;background:#f8ecea;border-radius:8px"></div>
<div class="t" style="left:1800.50px;top:1655.08px;font-size:24px;color:#a8271c;font-weight:700;letter-spacing:-0.334px;">CRITICAL</div>
<svg style="left:2185.5px;top:1652.8999999999999px" width="29.0" height="29.0" viewBox="0 0 29 29"><circle cx="14.5" cy="14.5" r="14.5" fill="#d3473a"/><path d="M7.9 7.9 L21.1 21.1 M21.1 7.9 L7.9 21.1" stroke="#fff" stroke-width="2.6"/></svg>
<div class="t" style="left:2224.00px;top:1655.08px;font-size:24px;color:#1c1c26;-webkit-text-stroke-width:0.3px;letter-spacing:0.059px;">Failed</div>
<div class="t" style="left:2451.30px;top:1655.08px;font-size:24px;color:#1c1c26;-webkit-text-stroke-width:0.3px;letter-spacing:0.659px;">23 hours ago</div>
<svg style="left:2848.0px;top:1652.8999999999999px" width="29.0" height="29.0" viewBox="0 0 29 29"><circle cx="14.5" cy="14.5" r="14.5" fill="#d3473a"/><path d="M7.9 7.9 L21.1 21.1 M21.1 7.9 L7.9 21.1" stroke="#fff" stroke-width="2.6"/></svg><svg style="left:2886.0px;top:1652.8999999999999px" width="29.0" height="29.0" viewBox="0 0 29 29"><circle cx="14.5" cy="14.5" r="14.5" fill="#d3473a"/><path d="M7.9 7.9 L21.1 21.1 M21.1 7.9 L7.9 21.1" stroke="#fff" stroke-width="2.6"/></svg><svg style="left:2924.0px;top:1652.8999999999999px" width="29.0" height="29.0" viewBox="0 0 29 29"><circle cx="14.5" cy="14.5" r="14.5" fill="#d3473a"/><path d="M7.9 7.9 L21.1 21.1 M21.1 7.9 L7.9 21.1" stroke="#fff" stroke-width="2.6"/></svg><svg style="left:2962.0px;top:1652.8999999999999px" width="29.0" height="29.0" viewBox="0 0 29 29"><circle cx="14.5" cy="14.5" r="14.5" fill="#d3473a"/><path d="M7.9 7.9 L21.1 21.1 M21.1 7.9 L7.9 21.1" stroke="#fff" stroke-width="2.6"/></svg><svg style="left:3000.0px;top:1652.8999999999999px" width="29.0" height="29.0" viewBox="0 0 29 29"><circle cx="14.5" cy="14.5" r="14.5" fill="#d3473a"/><path d="M7.9 7.9 L21.1 21.1 M21.1 7.9 L7.9 21.1" stroke="#fff" stroke-width="2.6"/></svg><svg style="left:3038.0px;top:1652.8999999999999px" width="29.0" height="29.0" viewBox="0 0 29 29"><circle cx="14.5" cy="14.5" r="14.5" fill="#d3473a"/><path d="M7.9 7.9 L21.1 21.1 M21.1 7.9 L7.9 21.1" stroke="#fff" stroke-width="2.6"/></svg><svg style="left:3076.0px;top:1652.8999999999999px" width="29.0" height="29.0" viewBox="0 0 29 29"><circle cx="14.5" cy="14.5" r="14.5" fill="#d3473a"/><path d="M7.9 7.9 L21.1 21.1 M21.1 7.9 L7.9 21.1" stroke="#fff" stroke-width="2.6"/></svg>
<div class="a" style="left:560px;top:1755.60px;width:2720px;height:144px;background:#fff;border-radius:8px;box-shadow:0 2px 4px rgba(40,41,61,0.09),0 0 1px rgba(40,41,61,0.05)"></div>
<div class="t" style="left:594.40px;top:1790.82px;font-size:21px;color:#8c8ea8;-webkit-text-stroke-width:0.3px;letter-spacing:-0.092px;">Id: 2.4.2</div>
<div class="t" style="left:594.40px;top:1835.28px;font-size:24px;color:#0b0b0d;-webkit-text-stroke-width:0.3px;letter-spacing:0.641px;">Ensure all external dependencies used in the build process are locked</div>
<svg style="left:1516px;top:1797.6px" width="60" height="60" viewBox="0 0 60 60">
<defs><linearGradient id="cg" x1="0" y1="0" x2="0" y2="1"><stop offset="0" stop-color="#8dbde3" stop-opacity="0.5"/><stop offset="0.3" stop-color="#3f86c7"/><stop offset="0.75" stop-color="#3f86c7"/><stop offset="1" stop-color="#8dbde3" stop-opacity="0.5"/></linearGradient></defs>
<path d="M31 7.5 A22.4 22.4 0 0 0 31 52.3" fill="none" stroke="url(#cg)" stroke-width="1.5"/>
<path d="M47.5 20 A18.6 18.6 0 1 0 14.5 38.5" fill="none" stroke="#3f86c7" stroke-width="1.5" stroke-opacity="0.9"/>
<text x="17.0" y="35.8" font-family="Liberation Serif" font-weight="700" font-size="18" fill="#173a60" letter-spacing="-1.25">CIS</text></svg>
<div class="a" style="left:1787px;top:1805.60px;width:135px;height:44px;background:#f8ecea;border-radius:8px"></div>
<div class="t" style="left:1800.50px;top:1815.28px;font-size:24px;color:#a8271c;font-weight:700;letter-spacing:-0.334px;">CRITICAL</div>
<svg style="left:2185.5px;top:1813.1px" width="29.0" height="29.0" viewBox="0 0 29 29"><circle cx="14.5" cy="14.5" r="14.5" fill="#d3473a"/><path d="M7.9 7.9 L21.1 21.1 M21.1 7.9 L7.9 21.1" stroke="#fff" stroke-width="2.6"/></svg>
<div class="t" style="left:2224.00px;top:1815.28px;font-size:24px;color:#1c1c26;-webkit-text-stroke-width:0.3px;letter-spacing:0.059px;">Failed</div>
<div class="t" style="left:2451.30px;top:1815.28px;font-size:24px;color:#1c1c26;-webkit-text-stroke-width:0.3px;letter-spacing:0.659px;">23 hours ago</div>
<svg style="left:2848.0px;top:1813.1px" width="29.0" height="29.0" viewBox="0 0 29 29"><circle cx="14.5" cy="14.5" r="14.5" fill="#d3473a"/><path d="M7.9 7.9 L21.1 21.1 M21.1 7.9 L7.9 21.1" stroke="#fff" stroke-width="2.6"/></svg><svg style="left:2886.0px;top:1813.1px" width="29.0" height="29.0" viewBox="0 0 29 29"><circle cx="14.5" cy="14.5" r="14.5" fill="#d3473a"/><path d="M7.9 7.9 L21.1 21.1 M21.1 7.9 L7.9 21.1" stroke="#fff" stroke-width="2.6"/></svg><svg style="left:2924.0px;top:1813.1px" width="29.0" height="29.0" viewBox="0 0 29 29"><circle cx="14.5" cy="14.5" r="14.5" fill="#d3473a"/><path d="M7.9 7.9 L21.1 21.1 M21.1 7.9 L7.9 21.1" stroke="#fff" stroke-width="2.6"/></svg><svg style="left:2962.0px;top:1813.1px" width="29.0" height="29.0" viewBox="0 0 29 29"><circle cx="14.5" cy="14.5" r="14.5" fill="#d3473a"/><path d="M7.9 7.9 L21.1 21.1 M21.1 7.9 L7.9 21.1" stroke="#fff" stroke-width="2.6"/></svg><svg style="left:3000.0px;top:1813.1px" width="29.0" height="29.0" viewBox="0 0 29 29"><circle cx="14.5" cy="14.5" r="14.5" fill="#d3473a"/><path d="M7.9 7.9 L21.1 21.1 M21.1 7.9 L7.9 21.1" stroke="#fff" stroke-width="2.6"/></svg><svg style="left:3038.0px;top:1813.1px" width="29.0" height="29.0" viewBox="0 0 29 29"><circle cx="14.5" cy="14.5" r="14.5" fill="#d3473a"/><path d="M7.9 7.9 L21.1 21.1 M21.1 7.9 L7.9 21.1" stroke="#fff" stroke-width="2.6"/></svg><svg style="left:3076.0px;top:1813.1px" width="29.0" height="29.0" viewBox="0 0 29 29"><circle cx="14.5" cy="14.5" r="14.5" fill="#d3473a"/><path d="M7.9 7.9 L21.1 21.1 M21.1 7.9 L7.9 21.1" stroke="#fff" stroke-width="2.6"/></svg>
<div class="a" style="left:560px;top:1915.80px;width:2720px;height:144px;background:#fff;border-radius:8px;box-shadow:0 2px 4px rgba(40,41,61,0.09),0 0 1px rgba(40,41,61,0.05)"></div>
<div class="t" style="left:594.40px;top:1951.02px;font-size:21px;color:#8c8ea8;-webkit-text-stroke-width:0.3px;letter-spacing:-0.314px;">Id: 3.1.7</div>
<svg style="left:1516px;top:1957.8px" width="60" height="60" viewBox="0 0 60 60">
<defs><linearGradient id="cg" x1="0" y1="0" x2="0" y2="1"><stop offset="0" stop-color="#8dbde3" stop-opacity="0.5"/><stop offset="0.3" stop-color="#3f86c7"/><stop offset="0.75" stop-color="#3f86c7"/><stop offset="1" stop-color="#8dbde3" stop-opacity="0.5"/></linearGradient></defs>
<path d="M31 7.5 A22.4 22.4 0 0 0 31 52.3" fill="none" stroke="url(#cg)" stroke-width="1.5"/>
<path d="M47.5 20 A18.6 18.6 0 1 0 14.5 38.5" fill="none" stroke="#3f86c7" stroke-width="1.5" stroke-opacity="0.9"/>
<text x="17.0" y="35.8" font-family="Liberation Serif" font-weight="700" font-size="18" fill="#173a60" letter-spacing="-1.25">CIS</text></svg>
<div class="a" style="left:1787px;top:1965.80px;width:135px;height:44px;background:#f8ecea;border-radius:8px"></div>
<div class="t" style="left:1800.50px;top:1975.48px;font-size:24px;color:#a8271c;font-weight:700;letter-spacing:-0.334px;">CRITICAL</div>
<svg style="left:2185.5px;top:1973.3px" width="29.0" height="29.0" viewBox="0 0 29 29"><circle cx="14.5" cy="14.5" r="14.5" fill="#d3473a"/><path d="M7.9 7.9 L21.1 21.1 M21.1 7.9 L7.9 21.1" stroke="#fff" stroke-width="2.6"/></svg>
<div class="t" style="left:2224.00px;top:1975.48px;font-size:24px;color:#1c1c26;-webkit-text-stroke-width:0.3px;letter-spacing:0.059px;">Failed</div>
<div class="t" style="left:2451.30px;top:1975.48px;font-size:24px;color:#1c1c26;-webkit-text-stroke-width:0.3px;letter-spacing:0.659px;">23 hours ago</div>
<svg style="left:2848.0px;top:1973.3px" width="29.0" height="29.0" viewBox="0 0 29 29"><circle cx="14.5" cy="14.5" r="14.5" fill="#d3473a"/><path d="M7.9 7.9 L21.1 21.1 M21.1 7.9 L7.9 21.1" stroke="#fff" stroke-width="2.6"/></svg><svg style="left:2886.0px;top:1973.3px" width="29.0" height="29.0" viewBox="0 0 29 29"><circle cx="14.5" cy="14.5" r="14.5" fill="#d3473a"/><path d="M7.9 7.9 L21.1 21.1 M21.1 7.9 L7.9 21.1" stroke="#fff" stroke-width="2.6"/></svg><svg style="left:2924.0px;top:1973.3px" width="29.0" height="29.0" viewBox="0 0 29 29"><circle cx="14.5" cy="14.5" r="14.5" fill="#d3473a"/><path d="M7.9 7.9 L21.1 21.1 M21.1 7.9 L7.9 21.1" stroke="#fff" stroke-width="2.6"/></svg><svg style="left:2962.0px;top:1973.3px" width="29.0" height="29.0" viewBox="0 0 29 29"><circle cx="14.5" cy="14.5" r="14.5" fill="#d3473a"/><path d="M7.9 7.9 L21.1 21.1 M21.1 7.9 L7.9 21.1" stroke="#fff" stroke-width="2.6"/></svg><svg style="left:3000.0px;top:1973.3px" width="29.0" height="29.0" viewBox="0 0 29 29"><circle cx="14.5" cy="14.5" r="14.5" fill="#d3473a"/><path d="M7.9 7.9 L21.1 21.1 M21.1 7.9 L7.9 21.1" stroke="#fff" stroke-width="2.6"/></svg><svg style="left:3038.0px;top:1973.3px" width="29.0" height="29.0" viewBox="0 0 29 29"><circle cx="14.5" cy="14.5" r="14.5" fill="#d3473a"/><path d="M7.9 7.9 L21.1 21.1 M21.1 7.9 L7.9 21.1" stroke="#fff" stroke-width="2.6"/></svg><svg style="left:3076.0px;top:1973.3px" width="29.0" height="29.0" viewBox="0 0 29 29"><circle cx="14.5" cy="14.5" r="14.5" fill="#d3473a"/><path d="M7.9 7.9 L21.1 21.1 M21.1 7.9 L7.9 21.1" stroke="#fff" stroke-width="2.6"/></svg>
<div class="a" style="left:0;top:4px;width:462px;height:1984px;background:#0f1a2d"></div><div class="a" style="left:462px;top:4px;width:2px;height:1984px;background:#33343f"></div><div class="a" style="left:464px;top:4px;width:14px;height:1984px;background:linear-gradient(90deg,rgba(40,41,61,0.07),rgba(40,41,61,0))"></div>
<svg style="left:33px;top:42px" width="62" height="63" viewBox="0 0 62 63">
<defs><linearGradient id="lg" x1="0" y1="1" x2="1" y2="0"><stop offset="0" stop-color="#f1a088"/><stop offset="1" stop-color="#e05a33"/></linearGradient></defs>
<path d="M1 0.5 H61 V18 C61 38 48 54 31 63 C14 54 1 38 1 18 Z" fill="url(#lg)"/>
<g fill="none" stroke="#0f1a2d" stroke-width="4.2">
<circle cx="39" cy="12.5" r="6"/><circle cx="17.5" cy="24.5" r="6"/><circle cx="36.5" cy="42.5" r="6.8"/>
<path d="M0 20.5 L11.5 22 M23 21.5 L33.5 15.5 M22 29 L31 37"/></g></svg>
<div class="t" style="left:112.30px;top:44.31px;font-size:26.8px;color:#ffffff;font-weight:700;letter-spacing:-0.486px;">Supply Chain</div>
<div class="t" style="left:112.30px;top:76.31px;font-size:26.8px;color:#ffffff;font-weight:700;letter-spacing:-0.219px;">Security</div>
<svg style="left:0;top:0" width="463" height="200"><g fill="#6b6e86"><circle cx="382.1" cy="63.0" r="3.85"/><circle cx="393.6" cy="63.0" r="3.85"/><circle cx="405.1" cy="63.0" r="3.85"/><circle cx="382.1" cy="74.5" r="3.85"/><circle cx="393.6" cy="74.5" r="3.85"/><circle cx="405.1" cy="74.5" r="3.85"/><circle cx="382.1" cy="86.0" r="3.85"/><circle cx="393.6" cy="86.0" r="3.85"/><circle cx="405.1" cy="86.0" r="3.85"/></g></svg>
<div class="a" style="left:32px;top:128px;width:398px;height:4px;background:#e4603e"></div>
<div class="a" style="left:32px;top:164px;width:398px;height:106px;background:#131722;border:2px solid #474b5e;border-radius:9px"></div>
<svg style="left:60px;top:186px" width="21" height="21" viewBox="0 0 21 21"><g fill="none" stroke="#6b6e86" stroke-width="1.6" stroke-linejoin="round">
<path d="M10.5 1.5 L19 6 V15 L10.5 19.5 L2 15 V6 Z M2 6 L10.5 10.5 L19 6 M10.5 10.5 V19.5 M6 3.8 L14.5 8.3"/></g></svg>
<div class="t" style="left:90.20px;top:189.11px;font-size:17px;color:#8b8da5;font-weight:700;letter-spacing:-0.216px;">PROJECT</div>
<div class="t" style="left:59.00px;top:216.30px;font-size:28px;color:#ffffff;-webkit-text-stroke-width:0.3px;letter-spacing:0.582px;">Product Exploratory</div>
<svg style="left:388px;top:206px" width="16" height="22" viewBox="0 0 16 22"><path d="M3 2.5 L11.5 11 L3 19.5" fill="none" stroke="#6b6e86" stroke-width="3.6" stroke-linecap="round" stroke-linejoin="round"/></svg>
<div class="t" style="left:104.50px;top:329.10px;font-size:26.7px;color:#c4c5d7;-webkit-text-stroke-width:0.3px;letter-spacing:0.408px;-webkit-text-stroke:0.35px #c4c5d7;">Get Started</div>
<svg style="left:40px;top:310px" width="60" height="60" viewBox="0 0 60 60"><g fill="none" stroke="#6b6e86" stroke-width="2.7" stroke-linejoin="miter"><path d="M10.5 33.8 L28.2 16.2 L45.8 33.8 H38.7 V47.5 H17.3 V33.8 Z"/><rect x="24.4" y="33.9" width="7.4" height="7.7"/></g></svg>
<div class="t" style="left:64.30px;top:428.10px;font-size:21.5px;color:#777a93;-webkit-text-stroke-width:0.3px;letter-spacing:-0.946px;">SUPPLY CHAIN</div>
<div class="t" style="left:104.50px;top:493.80px;font-size:26.7px;color:#c4c5d7;-webkit-text-stroke-width:0.3px;letter-spacing:0.238px;-webkit-text-stroke:0.35px #c4c5d7;">Code Repositories</div>
<svg style="left:51px;top:491.70000000000005px" width="34" height="32" viewBox="0 0 34 32"><g fill="none" stroke="#6b6e86" stroke-width="2"><ellipse cx="17" cy="4" rx="15" ry="3"/><path d="M2 4 L4 27 C4 30 30 30 30 27 L32 4"/><path d="M12 12 L8 16 L12 20 M22 12 L26 16 L22 20 M18.5 11 L15.5 21" stroke-width="1.6"/></g></svg>
<div class="t" style="left:104.50px;top:577.10px;font-size:26.7px;color:#c4c5d7;-webkit-text-stroke-width:0.3px;letter-spacing:0.844px;-webkit-text-stroke:0.35px #c4c5d7;">Artifacts</div>
<svg style="left:52px;top:573px" width="32" height="34" viewBox="0 0 32 34"><g fill="none" stroke="#6b6e86" stroke-width="1.7" stroke-linejoin="round"><path d="M16 1.5 L30.5 8 V25.5 L16 32.5 L1.5 25.5 V8 Z M1.5 8 L16 15 L30.5 8 M16 15 V32.5 M8 4.7 L23 11.6"/></g></svg>
<div class="a" style="left:32px;top:634px;width:398px;height:80px;background:#1f2b45;border-radius:8px"></div>
<div class="t" style="left:104.50px;top:661.10px;font-size:26.7px;color:#5ec3f5;-webkit-text-stroke-width:0.3px;letter-spacing:-0.128px;-webkit-text-stroke:0.35px #5ec3f5;">CI/CD</div>
<svg style="left:40px;top:650px" width="60" height="48" viewBox="0 0 60 48"><path d="M25.1 27.5 A7.7 7.7 0 1 1 22 17.3 L33.2 30.8 A7.7 7.7 0 1 0 30.8 20.4" fill="none" stroke="#5ec5f7" stroke-width="3.1"/></svg>
<div class="t" style="left:64.30px;top:759.90px;font-size:21.5px;color:#777a93;-webkit-text-stroke-width:0.3px;letter-spacing:-1.053px;">RISK AND COMPLIANCE</div>
<div class="t" style="left:104.50px;top:825.30px;font-size:26.7px;color:#c4c5d7;-webkit-text-stroke-width:0.3px;letter-spacing:0.209px;-webkit-text-stroke:0.35px #c4c5d7;">Compliance</div>
<svg style="left:51px;top:820.2px" width="34" height="36" viewBox="0 0 34 36"><g fill="none" stroke="#6b6e86" stroke-width="1.7"><path d="M22 33 H1.5 V1.5 H18 L26 9.5 V18 M18 1.5 V9.5 H26 M6 11 H20 M6 16 H20 M6 21 H15 M6 26 H15"/><circle cx="24" cy="25" r="5"/><path d="M27.5 28.5 L32 33"/></g></svg>
<div class="t" style="left:104.50px;top:909.30px;font-size:26.7px;color:#c4c5d7;-webkit-text-stroke-width:0.3px;letter-spacing:0.163px;-webkit-text-stroke:0.35px #c4c5d7;">Rule Definitions</div>
<svg style="left:50px;top:901.2px" width="36" height="42" viewBox="0 0 36 42"><g fill="none" stroke="#6b6e86" stroke-width="2.6"><path d="M9 5 H2 V39 H34 V5 H27"/><rect x="11" y="1.5" width="14" height="7"/><path d="M11 22 L16 27 L25 18"/></g></svg>
<div class="t" style="left:104.50px;top:993.40px;font-size:26.7px;color:#c4c5d7;-webkit-text-stroke-width:0.3px;letter-spacing:0.251px;-webkit-text-stroke:0.35px #c4c5d7;">Remediation Tracker</div>
<svg style="left:40px;top:975.3px" width="60" height="60" viewBox="0 0 60 60"><g fill="none" stroke="#6b6e86" stroke-width="2.4" stroke-linejoin="round"><path d="M27 13.6 L41.2 21.4 V28.8 M27 13.6 L12.8 21.4 V37.9 L27 44.9 M12.8 21.4 L26.6 29.7 L41.2 21.4 M27 14.8 V27.2 M26.6 30.5 V40.8"/><rect x="27.7" y="36.2" width="18" height="10" rx="5" transform="rotate(-45 36.7 41.2)"/></g><g fill="#6b6e86"><circle cx="34.5" cy="43" r="1"/><circle cx="36.7" cy="41" r="1"/><circle cx="38.7" cy="39" r="1"/></g></svg>
<div class="t" style="left:64.30px;top:1091.90px;font-size:21.5px;color:#777a93;-webkit-text-stroke-width:0.3px;letter-spacing:-1.448px;">MANAGE</div>
<div class="t" style="left:104.50px;top:1158.10px;font-size:26.7px;color:#c4c5d7;-webkit-text-stroke-width:0.3px;letter-spacing:0.460px;-webkit-text-stroke:0.35px #c4c5d7;">Integrations</div>
<svg style="left:54px;top:1155px" width="32" height="32" viewBox="0 0 32 32"><g fill="none" stroke="#6b6e86" stroke-width="1.6"><path d="M1.5 16 L5.5 12 L9.5 16 L5.5 20 Z M9.5 16 H29 M26 13 L29 16 L26 19 M13 12 L21 2 M18 2 H21 V5 M13 20 L21 30 M18 30 H21 V27"/></g></svg>
<div class="t" style="left:104.50px;top:1241.70px;font-size:26.7px;color:#c4c5d7;-webkit-text-stroke-width:0.3px;letter-spacing:0.047px;-webkit-text-stroke:0.35px #c4c5d7;">Pipelines</div>
<svg style="left:49px;top:1240.6px" width="38" height="28" viewBox="0 0 38 28"><g fill="none" stroke="#6b6e86" stroke-width="2.2"><rect x="1.5" y="1.5" width="10" height="7"/><rect x="22" y="1.5" width="14" height="7"/><rect x="22" y="16" width="14" height="7"/><path d="M11.5 5 H22 M8 8.5 V19.5 H22"/></g></svg>
<div class="a" style="left:32px;top:1339px;width:398px;height:2px;background:#3a3f52"></div>
<div class="t" style="left:104.50px;top:1399.70px;font-size:26.7px;color:#c4c5d7;-webkit-text-stroke-width:0.3px;letter-spacing:0.442px;-webkit-text-stroke:0.35px #c4c5d7;">Project Settings</div>
<svg style="left:51px;top:1394.6px" width="36" height="36" viewBox="0 0 36 36"><g fill="none" stroke="#6b6e86" stroke-width="2.4"><path d="M15 2 H21 L22 6.5 L25.5 8.5 L30 7 L33 12 L29.5 15.5 V20.5 L33 24 L30 29 L25.5 27.5 L22 29.5 L21 34 H15 L14 29.5 L10.5 27.5 L6 29 L3 24 L6.5 20.5 V15.5 L3 12 L6 7 L10.5 8.5 L14 6.5 Z" stroke-linejoin="round"/><circle cx="18" cy="18" r="5.5"/></g></svg>
<svg style="left:388px;top:1403px" width="14" height="22" viewBox="0 0 14 22"><path d="M2 2 L11 11 L2 20" fill="none" stroke="#8b8da5" stroke-width="2.4"/></svg>
<div class="a" style="left:32px;top:1497px;width:398px;height:2px;background:#3a3f52"></div>
<div class="t" style="left:104.50px;top:1557.90px;font-size:26.7px;color:#c4c5d7;-webkit-text-stroke-width:0.3px;letter-spacing:0.544px;-webkit-text-stroke:0.35px #c4c5d7;">Account Settings</div>
<svg style="left:40px;top:1539.8px" width="60" height="60" viewBox="0 0 60 60"><g fill="none" stroke="#6b6e86" stroke-width="2.2" stroke-linejoin="round"><path d="M32.44 16.26 L32.76 13.93 L35.64 13.93 L35.96 16.26 L38.47 17.70 L40.64 16.81 L42.09 19.31 L40.23 20.75 L40.23 23.65 L42.09 25.09 L40.64 27.59 L38.47 26.70 L35.96 28.14 L35.64 30.47 L32.76 30.47 L32.44 28.14 L29.93 26.70 L27.76 27.59 L26.31 25.09 L28.17 23.65 L28.17 20.75 L26.31 19.31 L27.76 16.81 L29.93 17.70 Z" stroke-width="1.8"/><circle cx="34.2" cy="22.2" r="3.2" stroke-width="1.8"/><path d="M21 19.4 L10.7 24.7 L33.4 34.6 L42.9 31.7 M14.5 36.2 L10.7 38.3 L26.8 47.8 L42.9 38.3 L37 35.6"/></g><path d="M10.7 31.7 L14.5 29.4 L33.4 37.6 L36.8 35.7 L26.8 41.8 Z" fill="#6b6e86" stroke="#6b6e86" stroke-width="1.5" stroke-linejoin="round"/></svg>
<svg style="left:386px;top:1557px" width="28" height="28" viewBox="0 0 28 28"><g fill="none" stroke="#6b6e86" stroke-width="2"><circle cx="14" cy="14" r="12.5"/><path d="M14 12 V21" stroke-width="2.4"/></g><circle cx="14" cy="8" r="1.6" fill="#6b6e86"/></svg>
<div class="t" style="left:104.50px;top:1641.10px;font-size:26.7px;color:#c4c5d7;-webkit-text-stroke-width:0.3px;letter-spacing:0.396px;-webkit-text-stroke:0.35px #c4c5d7;">Organization Settings</div>
<svg style="left:40px;top:1624px" width="60" height="60" viewBox="0 0 60 60"><g fill="none" stroke="#6b6e86" stroke-width="2.2"><path d="M32.44 16.26 L32.76 13.93 L35.64 13.93 L35.96 16.26 L38.47 17.70 L40.64 16.81 L42.09 19.31 L40.23 20.75 L40.23 23.65 L42.09 25.09 L40.64 27.59 L38.47 26.70 L35.96 28.14 L35.64 30.47 L32.76 30.47 L32.44 28.14 L29.93 26.70 L27.76 27.59 L26.31 25.09 L28.17 23.65 L28.17 20.75 L26.31 19.31 L27.76 16.81 L29.93 17.70 Z" stroke-width="1.8" stroke-linejoin="round"/><circle cx="34.2" cy="22.2" r="3.2" stroke-width="1.8"/><path d="M21.8 19.2 H15.7 V28 H23 M19.8 28.4 V33.6 M13.2 33.6 H37.9 M16.9 33.6 V38.3 M34.2 33.6 V38.3"/><rect x="10.9" y="38.2" width="11.8" height="9.8"/><rect x="28" y="38.2" width="12" height="9.8"/></g></svg>
<svg style="left:386px;top:1641px" width="28" height="28" viewBox="0 0 28 28"><g fill="none" stroke="#6b6e86" stroke-width="2"><circle cx="14" cy="14" r="12.5"/><path d="M14 12 V21" stroke-width="2.4"/></g><circle cx="14" cy="8" r="1.6" fill="#6b6e86"/></svg>
<div class="a" style="left:0;top:1718px;width:462px;height:21px;background:linear-gradient(#0f1a2d,#060a12)"></div>
<div class="a" style="left:0;top:1738px;width:462px;height:2px;background:#3a3f52"></div>
<svg style="left:52px;top:1800px" width="37" height="33" viewBox="0 0 37 33"><path d="M4 0.5 H27 Q30 0.5 30 3.5 V20 Q30 23 27 23 H9 L4 28 V23 Q1 23 1 20 V3.5 Q1 0.5 4 0.5 Z" fill="#6b6e86"/><path d="M33 12 V30 H28 V32.5 L25 30 H11 V26" fill="none" stroke="#6b6e86" stroke-width="2"/><text x="15.5" y="17" font-size="16" font-weight="700" fill="#0f1a2d" text-anchor="middle" font-family="Liberation Sans">?</text></svg>
<div class="t" style="left:104.70px;top:1798.70px;font-size:26.7px;color:#c4c5d7;-webkit-text-stroke-width:0.3px;letter-spacing:-0.094px;-webkit-text-stroke:0.35px #c4c5d7;">Help</div>
<div class="a" style="left:50px;top:1900px;width:48px;height:48px;border-radius:50%;background:#6cc164;border:2px solid #fff"></div>
<div class="t" style="left:68.00px;top:1916.07px;font-size:20px;color:#ffffff;font-weight:700;letter-spacing:-0.219px;">L</div>
<div class="t" style="left:109.20px;top:1910.99px;font-size:26px;color:#b6b8cc;-webkit-text-stroke-width:0.3px;letter-spacing:0.592px;">Lavakush</div>
<svg style="left:439px;top:1776px" width="24" height="112" viewBox="0 0 24 112"><path d="M24 0 L24 112 L3 88 Q0 85 0 80 V32 Q0 27 3 24 Z" fill="#aaacc2"/><path d="M6 56 L18 49 V63 Z" fill="#0f1a2d"/></svg>
<div class="a" style="left:0;top:0;width:3456px;height:4px;background:#3a3a3c"></div>
<svg style="left:3397px;top:1880px" width="40" height="40" viewBox="0 0 40 40"><g fill="none" stroke="#5d6178" stroke-width="2.4" stroke-linecap="round">
<path d="M9 11 A14 14 0 1 1 37 21 L37.5 29 L29 28"/><circle cx="12" cy="26" r="10"/><path d="M2.5 37 L3 31 M2.5 37 L8 36"/></g></svg>
</body></html>
